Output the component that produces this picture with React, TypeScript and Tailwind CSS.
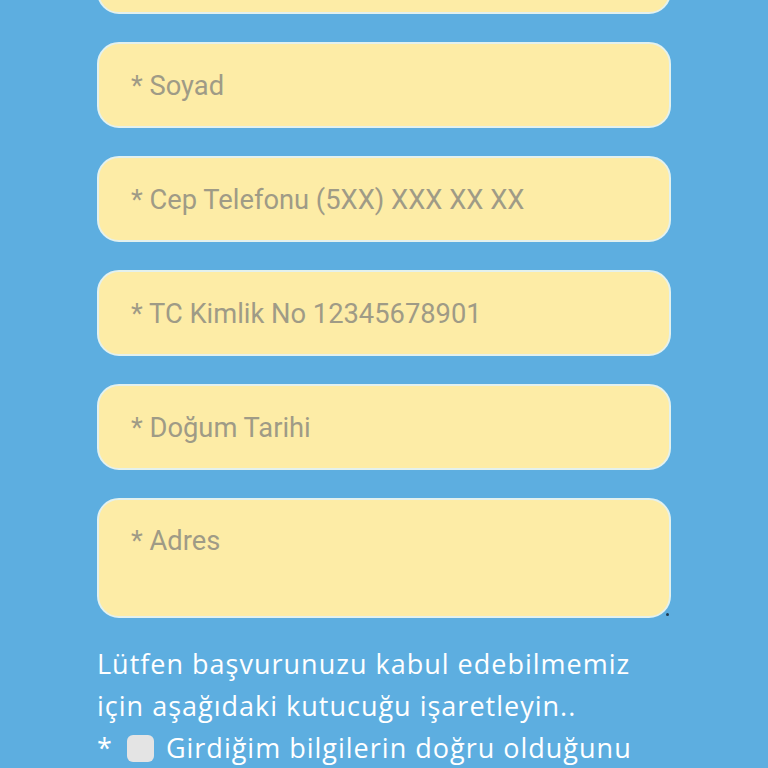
const fields = [
    { label: "* Ad", tall: false },
    { label: "* Soyad", tall: false },
    { label: "* Cep Telefonu (5XX) XXX XX XX", tall: false },
    { label: "* TC Kimlik No 12345678901", tall: false },
    { label: "* Doğum Tarihi", tall: false },
    { label: "* Adres", tall: true },
];

function Field({ label, tall }: { label: string; tall: boolean }) {
    return (
        <div
            className={`relative rounded-[22px] border-2 border-[#e3f1ee] bg-[#fdeca6] px-[32px] ${
                tall ? "h-[120px] pt-[28px]" : "flex h-[86px] items-center pt-[3px]"
            }`}
        >
            <span className="font-['Roboto',sans-serif] text-[27.3px] leading-none text-[#9f9b86]">
                {label}
            </span>
            {tall && (
                <span className="absolute right-[0px] bottom-[0px] h-[3px] w-[3px] rounded-full bg-[#1f3b52]" />
            )}
        </div>
    );
}

export default function App() {
    return (
        <div className="h-[768px] w-full overflow-hidden bg-[#5daee0]">
            <div className="mx-auto -mt-[72px] flex w-[574px] flex-col gap-[28px]">
                {fields.map((f) => (
                    <Field key={f.label} label={f.label} tall={f.tall} />
                ))}
            </div>
            <div className="mx-auto mt-[24px] w-[574px] font-['Open_Sans',sans-serif] text-[27px] leading-[44px] tracking-[1px] text-white">
                <p>Lütfen başvurunuzu kabul edebilmemiz</p>
                <p className="-mt-[2px]">için aşağıdaki kutucuğu işaretleyin..</p>
                <p className="-mt-[2px] flex items-center">
                    <span className="mr-[14px]">*</span>
                    <span className="mr-[12px] inline-block h-[27px] w-[27px] rounded-[6px] bg-[#e4e4e4]" />
                    <span>Girdiğim bilgilerin doğru olduğunu</span>
                </p>
            </div>
        </div>
    );
}
